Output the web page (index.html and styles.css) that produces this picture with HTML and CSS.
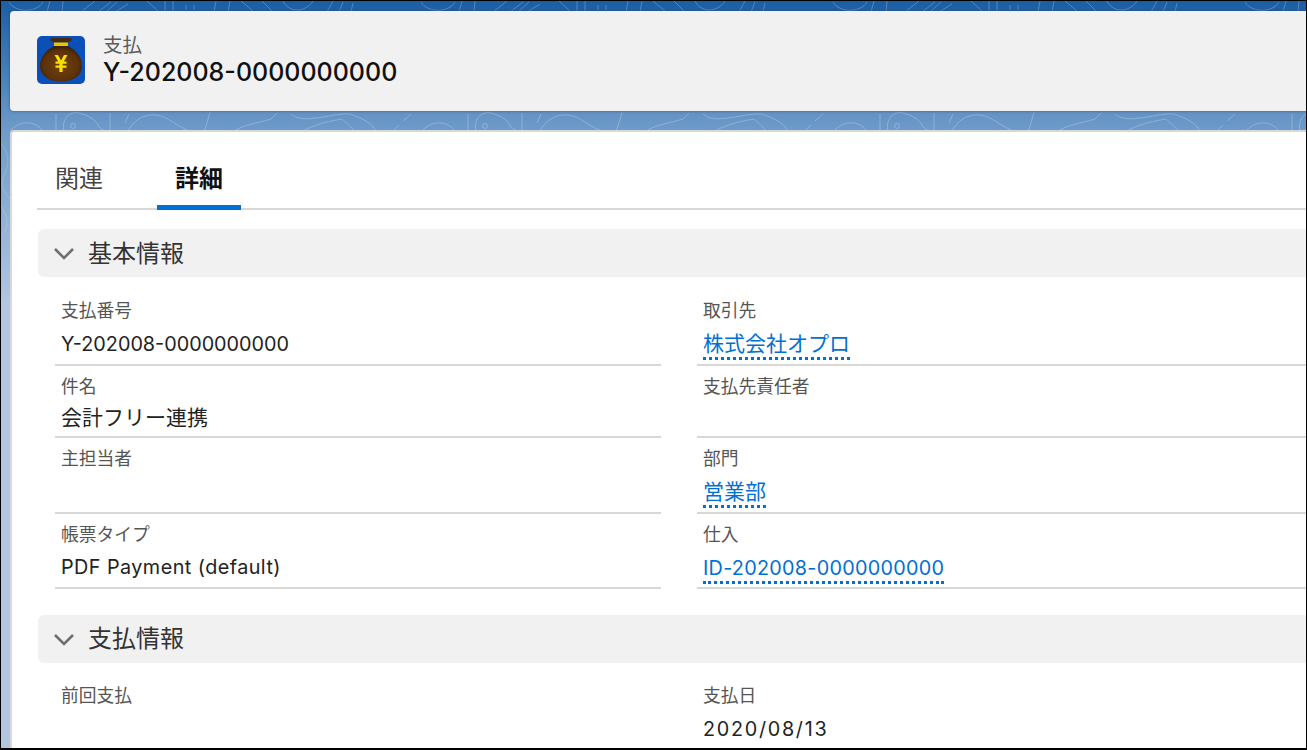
FILE: index.html
```html
<!DOCTYPE html>
<html lang="ja">
<head>
<meta charset="utf-8">
<title>支払</title>
<link rel="stylesheet" href="styles.css">
</head>
<body>
<div class="frame">
  <svg class="contours" width="1307" height="300" viewBox="0 0 1307 300" fill="none" aria-hidden="true">
    <defs>
      <pattern id="topo" width="412" height="130" patternUnits="userSpaceOnUse">
        <g stroke="#fff" stroke-opacity=".24" stroke-width="1" fill="none">
          <path d="M8 1C14 12 36 12 42 1"/>
          <path d="M49 0L46 11M61 11L62 0"/>
          <path d="M80 11L94 0M97 11L110 1M105 11L116 1M114 11L127 3"/>
          <path d="M146 0L158 11M164 0V11M172 0V11M185 4V9M193 4V9M215 0L213 11M227 11L229 0"/>
          <path d="M240 0L253 11M261 0L272 11M282 0C288 12 304 12 312 0M326 11L332 0M338 11L342 1M350 11L352 2"/>
          <path d="M8 131C18 119 34 119 42 130"/>
          <path d="M55 113V131"/>
          <path d="M63 131C60 116 70 110 78 112S94 118 97 124 104 128 105 131"/>
          <circle cx="72" cy="125" r="2.500"/>
          <path d="M109 112V131M128 113L124 122"/>
          <path d="M126 131C134 118 143 113 155 114S176 126 189 130 204 130 206 122L209 111"/>
          <path d="M232 131C240 124 258 122 270 118L276 112"/>
          <path d="M290 113C298 120 310 118 328 115S344 113 349 113C362 118 372 122 375 131"/>
          <path d="M300 131C316 122 330 120 341 118 348 124 352 128 354 131"/>
          <path d="M391 131L398 124M402 120L410 113"/>
        </g>
      </pattern>
    </defs>
    <rect width="1307" height="130" fill="url(#topo)"/>
    <g stroke="#fff" stroke-opacity=".18" stroke-width="1">
      <path d="M0 142C6 150 10 160 4 172S2 190 9 198"/>
      <path d="M0 205C5 212 9 222 3 232"/>
    </g>
  </svg>

  <header class="record-header">
    <svg class="record-icon" width="48" height="48" viewBox="0 0 48 48" aria-hidden="true">
      <defs>
        <radialGradient id="bag" cx="50%" cy="55%" r="58%">
          <stop offset="0" stop-color="#74400d"/>
          <stop offset=".72" stop-color="#5c3209"/>
          <stop offset="1" stop-color="#331c05"/>
        </radialGradient>
      </defs>
      <rect width="48" height="48" rx="5" fill="#0b50b8"/>
      <path d="M15 2H33C35 2 35.500 4 34 5L31 6.500H17L14 5C12.500 4 13 2 15 2Z" fill="#4a2a0c"/>
      <path d="M17 6.500H31V10H17Z" fill="#e9c400"/>
      <path d="M17 10H31C39 14 45 21 45 30 45 40 36 45.500 24 45.500S3 40 3 30C3 21 9 14 17 10Z" fill="url(#bag)"/>
      <path d="M17.500 19L21 19 24 24.500 27 19 30.500 19 26.800 25.500H29.500V27.800H25.600V29.500H29.500V31.800H25.600V36H22.400V31.800H18.500V29.500H22.400V27.800H18.500V25.500H21.200Z" fill="#f6e100"/>
    </svg>
    <div class="record-titles">
      <div class="record-type">支払</div>
      <h1 class="record-name">Y-202008-0000000000</h1>
    </div>
  </header>

  <main class="detail-card">
    <nav class="tabs">
      <a class="tab">関連</a>
      <a class="tab tab-active">詳細</a>
    </nav>

    <section class="section">
      <h2 class="section-head">
        <svg class="chevron" width="22" height="22" viewBox="0 0 22 22" fill="none" aria-hidden="true"><path d="M2 7L11 16 20 7" stroke="#706e6b" stroke-width="2.600"/></svg>
        <span class="section-title">基本情報</span>
      </h2>
      <div class="fields">
        <div class="field h-a"><div class="label">支払番号</div><div class="value latin">Y-202008-0000000000</div></div>
        <div class="field h-a"><div class="label">取引先</div><div class="value"><a class="link">株式会社オプロ</a></div></div>
        <div class="field h-b"><div class="label">件名</div><div class="value value-tight">会計フリー連携</div></div>
        <div class="field h-b"><div class="label">支払先責任者</div><div class="value"></div></div>
        <div class="field h-c"><div class="label">主担当者</div><div class="value"></div></div>
        <div class="field h-c"><div class="label">部門</div><div class="value"><a class="link">営業部</a></div></div>
        <div class="field h-d"><div class="label">帳票タイプ</div><div class="value latin latin-text">PDF Payment (default)</div></div>
        <div class="field h-d"><div class="label">仕入</div><div class="value latin latin-wide"><a class="link">ID-202008-0000000000</a></div></div>
      </div>
    </section>

    <section class="section section-second">
      <h2 class="section-head">
        <svg class="chevron" width="22" height="22" viewBox="0 0 22 22" fill="none" aria-hidden="true"><path d="M2 7L11 16 20 7" stroke="#706e6b" stroke-width="2.600"/></svg>
        <span class="section-title section-title-second">支払情報</span>
      </h2>
      <div class="fields fields-second">
        <div class="field h-a"><div class="label">前回支払</div><div class="value"></div></div>
        <div class="field h-a"><div class="label">支払日</div><div class="value latin date">2020/08/13</div></div>
      </div>
    </section>
  </main>
</div>
</body>
</html>
```

FILE: styles.css
```css
* { box-sizing: border-box; }
html, body { margin: 0; height: 100%; overflow: hidden; }
body {
  font-family: Inter, "Noto Sans CJK JP", sans-serif;
  color: #181818;
}
.frame {
  position: relative;
  width: 1307px;
  height: 750px;
  overflow: hidden;
  border: 1px solid #000;
  border-bottom-width: 2px;
  padding: 10px 0 0 9px;
  background: linear-gradient(180deg, #1b5ea4 0, #3f7ab5 60px, #6f9bc9 130px, #b0c6e1 300px, #b0c6e1 100%);
}
.contours { position: absolute; left: 0; top: 0; }
.record-header {
  position: relative;
  display: flex;
  align-items: center;
  gap: 18px;
  height: 100px;
  padding: 0 0 3px 27px;
  background: #f1f1f1;
  border-radius: 4px 0 0 4px;
  box-shadow: 0 0 2px 1px rgba(40, 60, 90, .3);
}
.record-titles { display: flex; flex-direction: column; }
.record-type { font-size: 19.5px; line-height: 24px; color: #5c5c5c; }
.record-name { margin: 0; font-size: 25px; line-height: 30px; font-weight: 500; color: #111; }
.detail-card {
  position: relative;
  height: 640px;
  margin: 19px 0 0 0;
  padding: 0 0 0 25px;
  background: #fff;
  border-top: 2px solid #d8d8d8;
  border-left: 2px solid #d8d8d8;
  border-radius: 4px 0 0 0;
}
.tabs {
  display: flex;
  height: 78px;
  padding-top: 14px;
  border-bottom: 2px solid #d8d8d8;
}
.tab {
  display: flex;
  align-items: center;
  justify-content: center;
  width: 84px;
  height: 64px;
  margin-right: 36px;
  padding-top: 2px;
  font-size: 24px;
  color: #444;
  border-bottom: 5px solid transparent;
}
.tab-active {
  margin: 0;
  font-weight: 700;
  color: #111;
  border-bottom-color: #0070d2;
}
.section { margin-top: 19px; margin-left: 1px; }
.section-second { margin-top: 26px; }
.section-head {
  display: flex;
  align-items: center;
  gap: 13px;
  height: 48px;
  margin: 0;
  padding-left: 15px;
  background: #f1f1f1;
  border-radius: 6px 0 0 6px;
  font-size: 24px;
  font-weight: 400;
  color: #333;
}
.section-title { padding-bottom: 4px; }
.section-title-second { padding-bottom: 6px; }
.fields {
  display: grid;
  grid-template-columns: 606px 1fr;
  column-gap: 36px;
  padding: 13px 0 0 17px;
}
.fields-second { padding-top: 12px; }
.field { border-bottom: 2px solid #d8d8d8; padding: 9px 0 0 6px; }
.h-a { height: 76px; }
.h-b { height: 72px; }
.h-c { height: 76px; }
.h-d { height: 75px; }
.label { font-size: 17.75px; line-height: 24px; color: #555; }
.value { font-size: 21px; line-height: 34px; margin-top: 4px; color: #222; }
.value-tight { margin-top: 2px; }
.latin { font-size: 19.8px; }
.latin-wide { letter-spacing: .28px; }
.latin-text { letter-spacing: .45px; margin-top: 3px; }
.date { letter-spacing: 1.7px; }
.link {
  color: #0070d2;
  border-bottom: 3px dotted #0070d2;
  padding-bottom: 1px;
}
```
